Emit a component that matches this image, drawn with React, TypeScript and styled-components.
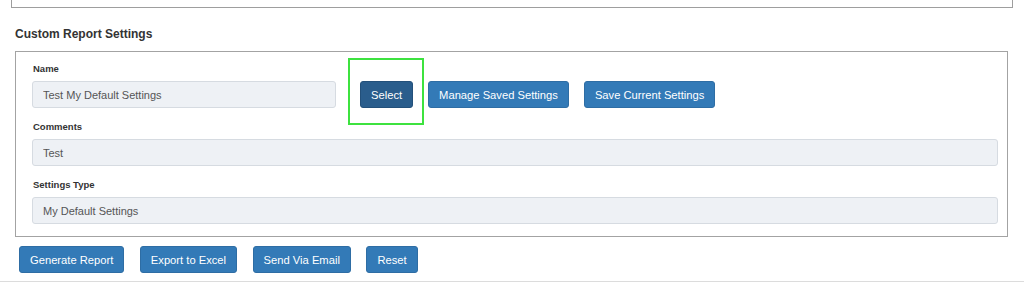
import React from 'react'
import styled, { createGlobalStyle } from 'styled-components'

const GlobalStyle = createGlobalStyle`
  html, body {
    margin: 0;
    padding: 0;
    background: #ffffff;
    font-family: 'Liberation Sans', Arial, sans-serif;
    color: #333333;
  }
`

const App: React.FC = () => {
  return (
    <>
      <GlobalStyle />
      <Page>
        <TopPanel />
        <Heading>Custom Report Settings</Heading>
        <SettingsBox>
          <FieldLabel>Name</FieldLabel>
          <NameRow>
            <TextInput width="304px" readOnly value="Test My Default Settings" />
            <ButtonGroup>
              <Highlighted>
                <Button dark>Select</Button>
                <Highlight />
              </Highlighted>
              <Button>Manage Saved Settings</Button>
              <Button>Save Current Settings</Button>
            </ButtonGroup>
          </NameRow>

          <FieldLabel>Comments</FieldLabel>
          <TextInput readOnly value="Test" />

          <FieldLabel>Settings Type</FieldLabel>
          <TextInput readOnly value="My Default Settings" />
        </SettingsBox>

        <ActionBar>
          <Button>Generate Report</Button>
          <Button>Export to Excel</Button>
          <Button>Send Via Email</Button>
          <Button>Reset</Button>
        </ActionBar>
      </Page>
    </>
  )
}

export default App

const Page = styled.div`
  width: 1024px;
  height: 282px;
  display: flex;
  flex-direction: column;
  overflow: hidden;
  border-bottom: 1px solid #dcdcdc;
  box-sizing: border-box;
`

const TopPanel = styled.div`
  height: 7px;
  margin: 0 11px;
  border: 1px solid #9e9e9e;
  border-top: none;
  flex: 0 0 auto;
`

const Heading = styled.h4`
  margin: 19px 0 0 15px;
  font-size: 12px;
  line-height: 14px;
  font-weight: bold;
  color: #333333;
`

const SettingsBox = styled.div`
  margin: 10px 15px 0 15px;
  padding: 11px 9px 12px 16px;
  border: 1px solid #a3a3a3;
  display: flex;
  flex-direction: column;
  width: 993px;
  box-sizing: border-box;
`

const FieldLabel = styled.label`
  font-size: 9.5px;
  line-height: 12px;
  font-weight: bold;
  color: #333333;
  margin: 0 0 6px 1px;

  &:not(:first-child) {
    margin-top: 13px;
  }
`

const NameRow = styled.div`
  display: flex;
  align-items: center;
  gap: 24px;
`

const ButtonGroup = styled.div`
  display: flex;
  align-items: center;
  gap: 15px;
`

const TextInput = styled.input<{ width?: string }>`
  width: ${p => p.width ?? '100%'};
  height: 27px;
  box-sizing: border-box;
  padding: 0 10px;
  font-family: 'Liberation Sans', Arial, sans-serif;
  font-size: 11px;
  color: #555555;
  background: #eef1f5;
  border: 1px solid #d6dbe1;
  border-radius: 3px;
  outline: none;
`

const Button = styled.button<{ dark?: boolean }>`
  height: 27px;
  padding: 0 10px;
  font-family: 'Liberation Sans', Arial, sans-serif;
  font-size: 11.2px;
  color: #ffffff;
  background: ${p => (p.dark ? '#2a5d8c' : '#337ab7')};
  border: 1px solid ${p => (p.dark ? '#23507a' : '#2e6da4')};
  border-radius: 3px;
  cursor: pointer;
  white-space: nowrap;
`

const Highlighted = styled.div`
  position: relative;
  display: flex;
`

const Highlight = styled.div`
  position: absolute;
  left: -12px;
  right: -11px;
  top: -23px;
  bottom: -17px;
  border: 2px solid #3de23f;
  pointer-events: none;
`

const ActionBar = styled.div`
  display: flex;
  gap: 15.5px;
  margin: 9px 0 0 19px;
`
